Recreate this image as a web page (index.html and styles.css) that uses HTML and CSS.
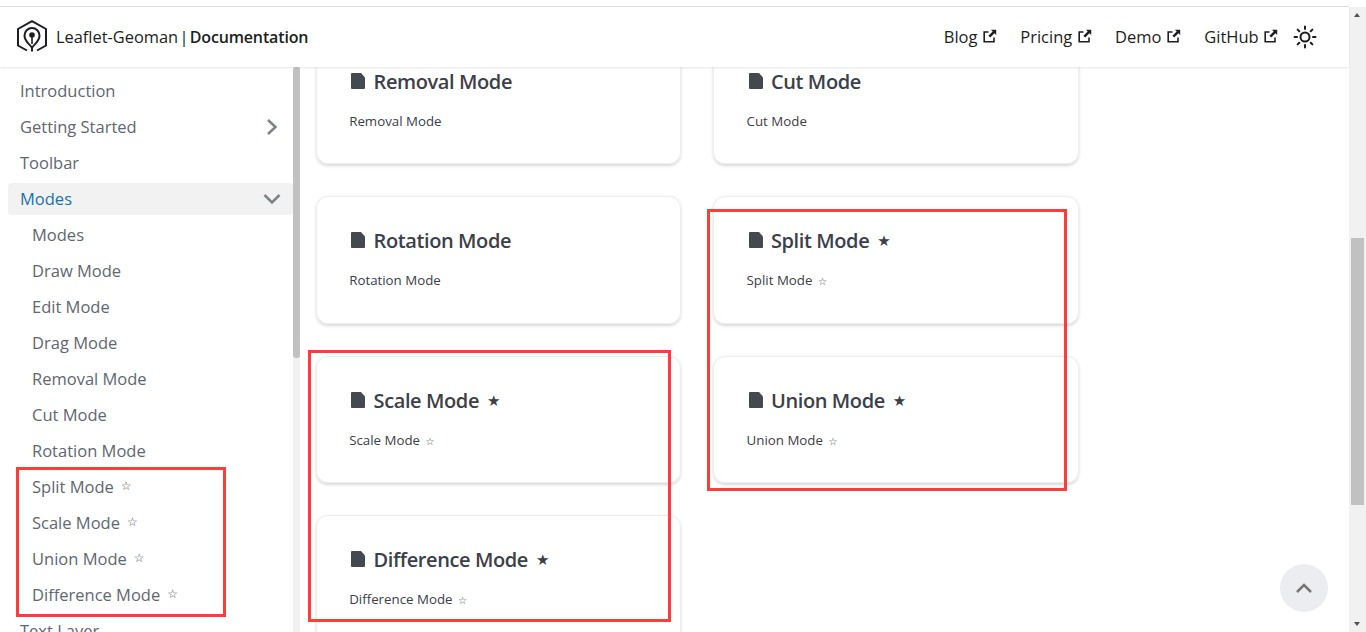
FILE: index.html
```html
<!DOCTYPE html>
<html lang="en">
<head>
    <meta charset="UTF-8">
    <title>Modes | Leaflet-Geoman</title>
    <link rel="stylesheet" href="styles.css">
</head>
<body>
    <svg class="icon-defs" width="0" height="0">
        <symbol id="doc" viewBox="0 0 15 16"><path d="M1 0h9l4 4.500V15a1 1 0 0 1-1 1H1a1 1 0 0 1-1-1V1a1 1 0 0 1 1-1z"/></symbol>
        <symbol id="ext" viewBox="0 0 14 14"><path d="M5.500 3H1.200v9.800H11V8.500" fill="none" stroke="currentColor" stroke-width="1.600"/><path d="M8 .8h5.200V6L11.400 4.200 7.200 8.600 5.400 6.800l4.300-4.200z"/></symbol>
    </svg>

    <div class="page">
        <header class="navbar">
            <a class="brand">
                <svg class="logo" viewBox="0 0 32 34" fill="none" stroke="#1c1e21" stroke-width="2">
                    <path d="M11 30.500 2 25.500V9L16 1.200 30 9v16.500L21 30.500"/>
                    <path d="M16 31.500V28c-1-3-7.500-6-7.500-12.500a7.500 7.500 0 0 1 15 0C23.500 22 17 25 16 28"/>
                    <circle cx="16" cy="15" r="2.800" fill="#1c1e21" stroke="none"/>
                    <path d="M16 15v9" stroke-width="1.600"/>
                </svg>
                <span class="brand-name">Leaflet-Geoman | <b>Documentation</b></span>
            </a>
            <nav class="nav-links">
                <a>Blog <svg class="ext"><use href="#ext"/></svg></a>
                <a>Pricing <svg class="ext"><use href="#ext"/></svg></a>
                <a>Demo <svg class="ext"><use href="#ext"/></svg></a>
                <a>GitHub <svg class="ext"><use href="#ext"/></svg></a>
            </nav>
            <svg class="sun" viewBox="0 0 24 24" fill="none" stroke="#1c1e21" stroke-width="2" stroke-linecap="round">
                <circle cx="12" cy="12" r="4.500"/>
                <path d="M12 1.500v2.500M12 20v2.500M1.500 12H4M20 12h2.500M4.600 4.600l1.700 1.700M17.700 17.700l1.700 1.700M4.600 19.400l1.700-1.700M17.700 6.300l1.700-1.700"/>
            </svg>
        </header>

        <div class="body-row">
            <aside class="sidebar">
                <ul class="menu">
                    <li><a>Introduction</a></li>
                    <li><a>Getting Started <svg class="chev" viewBox="0 0 18 18"><path d="M5 2l7.500 7L5 16"/></svg></a></li>
                    <li><a>Toolbar</a></li>
                    <li><a class="active">Modes <svg class="chev" viewBox="0 0 18 18"><path d="M1.500 5L9 12.500 16.500 5"/></svg></a></li>
                    <li class="sub"><a>Modes</a></li>
                    <li class="sub"><a>Draw Mode</a></li>
                    <li class="sub"><a>Edit Mode</a></li>
                    <li class="sub"><a>Drag Mode</a></li>
                    <li class="sub"><a>Removal Mode</a></li>
                    <li class="sub"><a>Cut Mode</a></li>
                    <li class="sub"><a>Rotation Mode</a></li>
                    <li class="sub"><a>Split Mode <span class="star">☆</span></a></li>
                    <li class="sub"><a>Scale Mode <span class="star">☆</span></a></li>
                    <li class="sub"><a>Union Mode <span class="star">☆</span></a></li>
                    <li class="sub"><a>Difference Mode <span class="star">☆</span></a></li>
                    <li><a>Text Layer</a></li>
                </ul>
                <div class="side-scroll"><div class="side-thumb"></div></div>
            </aside>

            <main class="content">
                <div class="cards">
                    <section class="card">
                        <h2><svg class="doc"><use href="#doc"/></svg>Removal Mode</h2>
                        <p>Removal Mode</p>
                    </section>
                    <section class="card">
                        <h2><svg class="doc"><use href="#doc"/></svg>Cut Mode</h2>
                        <p>Cut Mode</p>
                    </section>
                    <section class="card">
                        <h2><svg class="doc"><use href="#doc"/></svg>Rotation Mode</h2>
                        <p>Rotation Mode</p>
                    </section>
                    <section class="card">
                        <h2><svg class="doc"><use href="#doc"/></svg>Split Mode <span class="star-h">★</span></h2>
                        <p>Split Mode <span class="star-p">☆</span></p>
                    </section>
                    <section class="card">
                        <h2><svg class="doc"><use href="#doc"/></svg>Scale Mode <span class="star-h">★</span></h2>
                        <p>Scale Mode <span class="star-p">☆</span></p>
                    </section>
                    <section class="card">
                        <h2><svg class="doc"><use href="#doc"/></svg>Union Mode <span class="star-h">★</span></h2>
                        <p>Union Mode <span class="star-p">☆</span></p>
                    </section>
                    <section class="card">
                        <h2><svg class="doc"><use href="#doc"/></svg>Difference Mode <span class="star-h">★</span></h2>
                        <p>Difference Mode <span class="star-p">☆</span></p>
                    </section>
                </div>
            </main>
        </div>

        <div class="to-top"><svg viewBox="0 0 16 10"><path d="M1 9l7-7 7 7"/></svg></div>
    </div>

    <div class="page-scroll">
        <span class="arrow-up"></span>
        <div class="page-thumb"></div>
        <span class="arrow-down"></span>
    </div>

    <!-- red marks drawn over the screenshot -->
    <div class="mark mark-side"></div>
    <div class="mark mark-left"></div>
    <div class="mark mark-right"></div>
</body>
</html>
```

FILE: styles.css
```css
* {
    box-sizing: border-box;
}
html, body {
    margin: 0;
    height: 632px;
    overflow: hidden;
}
body {
    position: relative;
    display: flex;
    flex-direction: column;
    padding-top: 6px;
    font-family: "Open Sans", "Noto Sans", sans-serif;
    font-size: 16.5px;
    color: #1c1e21;
    background: #fff;
}
.icon-defs {
    position: absolute;
}
.page {
    position: relative;
    flex: 1;
    min-height: 0;
    margin-right: 17px;
    border-top: 1px solid #dedede;
    display: flex;
    flex-direction: column;
}

/* navbar */
.navbar {
    position: relative;
    z-index: 2;
    height: 60px;
    flex: none;
    display: flex;
    align-items: center;
    padding: 0 32px 0 16px;
    background: #fff;
    box-shadow: 0 1px 2px rgba(0, 0, 0, 0.1);
}
.brand {
    display: flex;
    align-items: center;
}
.logo {
    width: 32px;
    height: 34px;
    margin-right: 8px;
}
.brand-name {
    padding-bottom: 2px;
    font-size: 16.4px;
    word-spacing: -3px;
}
.brand-name b {
    font-size: 16px;
    font-weight: 600;
    letter-spacing: -0.15px;
}
.nav-links {
    margin-left: auto;
    display: flex;
    gap: 23.5px;
    margin-right: 15px;
    padding-bottom: 2px;
}
.nav-links a {
    white-space: nowrap;
}
.ext {
    width: 14px;
    height: 14px;
    margin-left: 1px;
    fill: currentColor;
}
.sun {
    width: 24px;
    height: 24px;
}

/* sidebar */
.body-row {
    flex: 1;
    min-height: 0;
    display: flex;
}
.sidebar {
    position: relative;
    width: 300px;
    flex: none;
    overflow: hidden;
}
.menu {
    list-style: none;
    margin: 0;
    padding: 8px 7px 0 8px;
}
.menu li {
    margin-bottom: 4px;
}
.menu a {
    display: flex;
    align-items: center;
    gap: 7px;
    height: 32px;
    padding: 0 12px 2px;
    color: #606770;
    border-radius: 4px;
}
.menu .sub a {
    padding-left: 24px;
}
.menu a.active {
    color: #1a73a8;
    background: #f2f2f2;
}
.chev {
    width: 18px;
    height: 18px;
    margin-top: 2px;
    margin-left: auto;
    fill: none;
    stroke: #7d8288;
    stroke-width: 2.500;
}
.star {
    font-size: 12px;
    font-family: "DejaVu Sans", sans-serif;
    color: #50565e;
}
.side-scroll {
    position: absolute;
    top: 0;
    right: 0;
    bottom: 0;
    width: 7px;
    background: #f1f1f1;
}
.side-thumb {
    height: 291px;
    background: #c1c1c1;
    border-radius: 3px;
}

/* cards */
.content {
    flex: 1;
    min-width: 0;
    overflow: hidden;
    padding-left: 16px;
}
.cards {
    display: grid;
    grid-template-columns: 365.4px 365.6px;
    column-gap: 32px;
    row-gap: 32px;
    margin-top: -30.2px;
}
.card {
    height: 127.5px;
    padding: 31px 32.2px;
    border: 1px solid #ededed;
    border-radius: 12px;
    box-shadow: 0 1.500px 3px 0 rgba(0, 0, 0, 0.15);
}
.card h2 {
    display: flex;
    align-items: center;
    margin: 0 0 16px;
    font-size: 20px;
    line-height: 26px;
    font-weight: 600;
    letter-spacing: -0.4px;
    color: #3c4049;
}
.doc {
    width: 15px;
    height: 16px;
    margin: 0 7.4px 2px 2px;
    fill: #444950;
}
.star-h {
    font-family: "DejaVu Sans", sans-serif;
    font-size: 15px;
    font-weight: 400;
    margin-left: 8px;
}
.card p {
    margin: 0;
    font-size: 13.3px;
    line-height: 20px;
    color: #3c4049;
}
.star-p {
    font-family: "DejaVu Sans", sans-serif;
    font-size: 10px;
    font-weight: 700;
    margin-left: 2px;
}

/* back to top */
.to-top {
    position: absolute;
    right: 21px;
    bottom: 20px;
    width: 48px;
    height: 48px;
    border-radius: 50%;
    background: #ebedf0;
    display: flex;
    align-items: center;
    justify-content: center;
}
.to-top svg {
    width: 16px;
    height: 10px;
    fill: none;
    stroke: #757575;
    stroke-width: 2.500;
}

/* window scrollbar */
.page-scroll {
    position: absolute;
    top: 7px;
    right: 0;
    bottom: 0;
    width: 17px;
    background: #f1f1f1;
}
.page-thumb {
    position: absolute;
    top: 231px;
    left: 2px;
    width: 13px;
    height: 267px;
    background: #c1c1c1;
}
.arrow-up,
.arrow-down {
    position: absolute;
    left: 5px;
    width: 0;
    height: 0;
    border-left: 3.500px solid transparent;
    border-right: 3.500px solid transparent;
}
.arrow-up {
    top: 6px;
    border-bottom: 4px solid #505050;
}
.arrow-down {
    bottom: 6px;
    border-top: 4px solid #505050;
}

/* red marks */
.mark {
    position: absolute;
    border: 3px solid #ff3b3b;
}
.mark-side {
    left: 16px;
    top: 467px;
    width: 210px;
    height: 150px;
}
.mark-left {
    left: 308px;
    top: 350px;
    width: 363px;
    height: 272px;
}
.mark-right {
    left: 707px;
    top: 209px;
    width: 360px;
    height: 282px;
}
```
